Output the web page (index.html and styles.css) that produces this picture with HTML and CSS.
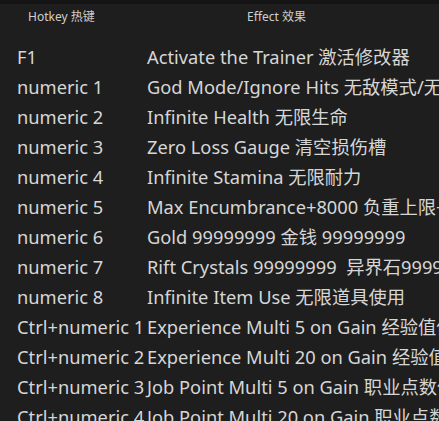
FILE: index.html
```html
<!DOCTYPE html>
<html>
<head>
<meta charset="utf-8">
<link rel="stylesheet" href="styles.css">
</head>
<body>
<div class="topbar"></div>
<div class="header">
  <div class="h-key">Hotkey 热键</div>
  <div class="h-eff">Effect 效果</div>
</div>
<div class="table">
  <div class="row"><div class="key">F1</div><div class="eff">Activate the Trainer 激活修改器</div></div>
  <div class="row"><div class="key">numeric 1</div><div class="eff">God Mode/Ignore Hits 无敌模式/无视攻击</div></div>
  <div class="row"><div class="key">numeric 2</div><div class="eff">Infinite Health 无限生命</div></div>
  <div class="row"><div class="key">numeric 3</div><div class="eff">Zero Loss Gauge 清空损伤槽</div></div>
  <div class="row"><div class="key">numeric 4</div><div class="eff">Infinite Stamina 无限耐力</div></div>
  <div class="row"><div class="key">numeric 5</div><div class="eff">Max Encumbrance+8000 负重上限+8000</div></div>
  <div class="row"><div class="key">numeric 6</div><div class="eff">Gold 99999999 金钱 99999999</div></div>
  <div class="row"><div class="key">numeric 7</div><div class="eff">Rift Crystals 99999999&nbsp; 异界石99999999</div></div>
  <div class="row"><div class="key">numeric 8</div><div class="eff">Infinite Item Use 无限道具使用</div></div>
  <div class="row"><div class="key">Ctrl+numeric 1</div><div class="eff">Experience Multi 5 on Gain 经验值倍率</div></div>
  <div class="row"><div class="key">Ctrl+numeric 2</div><div class="eff">Experience Multi 20 on Gain 经验值倍率</div></div>
  <div class="row"><div class="key">Ctrl+numeric 3</div><div class="eff">Job Point Multi 5 on Gain 职业点数倍率</div></div>
  <div class="row"><div class="key">Ctrl+numeric 4</div><div class="eff">Job Point Multi 20 on Gain 职业点数倍率</div></div>
</div>
</body>
</html>
```
FILE: styles.css
```css
html, body {
  margin: 0;
  padding: 0;
  height: 100%;
  overflow: hidden;
}
body {
  background: #1e1e1e;
  color: #d6d6d6;
  font-family: "Noto Sans", "Noto Sans CJK SC", sans-serif;
  white-space: nowrap;
}
.topbar {
  height: 4px;
  background: #141414;
}
.header {
  display: flex;
  height: 23px;
  align-items: center;
  font-size: 12px;
  color: #cfcfcf;
}
.h-key {
  width: 247px;
  padding-left: 28px;
  box-sizing: border-box;
}
.header .h-eff {
  flex: 1;
}
.table {
  padding-top: 14px;
}
.row {
  display: flex;
  height: 30px;
  align-items: center;
  font-size: 18.3px;
  padding-left: 17px;
}
.key {
  width: 130px;
  flex: none;
}
.eff {
  flex: none;
}
```
